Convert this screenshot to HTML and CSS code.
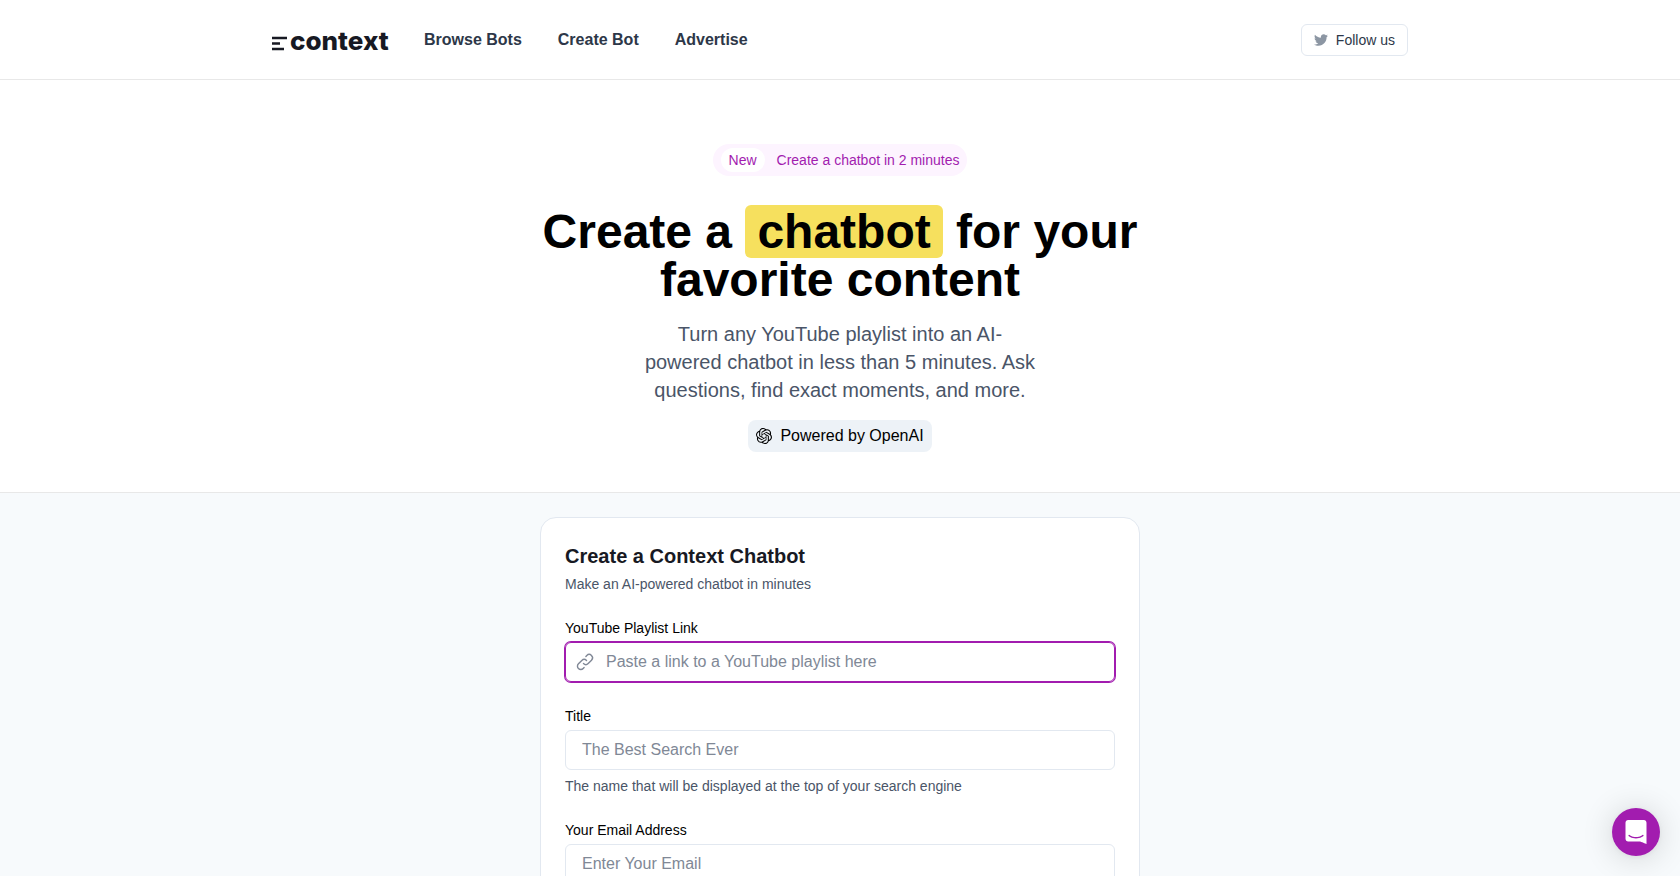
FILE: index.html
```html
<!DOCTYPE html>
<html lang="en">
<head>
  <meta charset="UTF-8">
  <meta name="viewport" content="width=device-width, initial-scale=1">
  <title>Context - Create a chatbot for your favorite content</title>
  <link rel="stylesheet" href="styles.css">
</head>
<body>

  <header class="header">
    <div class="header-inner">
      <a class="logo" href="#" aria-label="context">
        <svg width="116" height="32" viewBox="0 0 116 32">
          <path d="M0 14h15M0 19.500h8M0 25h12" stroke="currentColor" stroke-width="2.400" fill="none"/>
          <text class="logo-text" x="18" y="26">context</text>
        </svg>
      </a>
      <nav class="nav">
        <a href="#">Browse Bots</a>
        <a href="#">Create Bot</a>
        <a href="#">Advertise</a>
      </nav>
      <a class="follow" href="#">
        <svg width="14" height="14" viewBox="0 0 512 512" fill="currentColor" aria-hidden="true">
          <path d="M459.370 151.716c.325 4.548.325 9.097.325 13.645 0 138.720-105.583 298.558-298.558 298.558-59.452 0-114.680-17.219-161.137-47.106 8.447.974 16.568 1.299 25.340 1.299 49.055 0 94.213-16.568 130.274-44.832-46.132-.975-84.792-31.188-98.112-72.772 6.498.974 12.995 1.624 19.818 1.624 9.421 0 18.843-1.300 27.614-3.573-48.081-9.747-84.143-51.980-84.143-102.985v-1.299c13.969 7.797 30.214 12.670 47.431 13.319-28.264-18.843-46.781-51.005-46.781-87.391 0-19.492 5.197-37.360 14.294-52.954 51.655 63.675 129.300 105.258 216.365 109.807-1.624-7.797-2.599-15.918-2.599-24.040 0-57.828 46.782-104.934 104.934-104.934 30.213 0 57.502 12.670 76.670 33.137 23.715-4.548 46.456-13.320 66.599-25.340-7.798 24.366-24.366 44.833-46.132 57.827 21.117-2.273 41.584-8.122 60.426-16.243-14.292 20.791-32.161 39.308-52.628 54.253z"/>
        </svg>
        Follow us
      </a>
    </div>
  </header>

  <section class="hero">
    <a class="pill" href="#">
      <span class="pill-tag">New</span>
      Create a chatbot in 2 minutes
    </a>
    <h1>Create a <mark>chatbot</mark> for your favorite content</h1>
    <p class="lead">Turn any YouTube playlist into an AI-powered chatbot in less than 5 minutes. Ask questions, find exact moments, and more.</p>
    <div class="powered">
      <svg width="16" height="16" viewBox="0 0 24 24" fill="currentColor" aria-hidden="true">
        <path d="M22.2819 9.8211a5.9847 5.9847 0 0 0-.5157-4.9108 6.0462 6.0462 0 0 0-6.5098-2.9A6.0651 6.0651 0 0 0 4.9807 4.1818a5.9847 5.9847 0 0 0-3.9977 2.9 6.0462 6.0462 0 0 0 .7427 7.0966 5.98 5.98 0 0 0 .511 4.9107 6.051 6.051 0 0 0 6.5146 2.9001A5.9847 5.9847 0 0 0 13.2599 24a6.0557 6.0557 0 0 0 5.7718-4.2058 5.9894 5.9894 0 0 0 3.9977-2.9001 6.0557 6.0557 0 0 0-.7475-7.0729zm-9.022 12.6081a4.4755 4.4755 0 0 1-2.8764-1.0408l.1419-.0804 4.7783-2.7582a.7948.7948 0 0 0 .3927-.6813v-6.7369l2.02 1.1686a.071.071 0 0 1 .038.0520v5.5826a4.504 4.504 0 0 1-4.4945 4.4944zm-9.6607-4.1254a4.4708 4.4708 0 0 1-.5346-3.0137l.142.0852 4.783 2.7582a.7712.7712 0 0 0 .7806 0l5.8428-3.3685v2.3324a.0804.0804 0 0 1-.0332.0615L9.74 19.9502a4.4992 4.4992 0 0 1-6.1408-1.6464zM2.3408 7.8956a4.485 4.485 0 0 1 2.3655-1.9728V11.6a.7664.7664 0 0 0 .3879.6765l5.8144 3.3543-2.0201 1.1685a.0757.0757 0 0 1-.071 0l-4.8303-2.7865A4.504 4.504 0 0 1 2.3408 7.872zm16.5963 3.8558L13.1038 8.364 15.1192 7.2a.0757.0757 0 0 1 .071 0l4.8303 2.7913a4.4944 4.4944 0 0 1-.6765 8.1042v-5.6772a.79.79 0 0 0-.407-.667zm2.0107-3.0231l-.142-.0852-4.7735-2.7818a.7759.7759 0 0 0-.7854 0L9.409 9.2297V6.8974a.0662.0662 0 0 1 .0284-.0615l4.8303-2.7866a4.4992 4.4992 0 0 1 6.6802 4.66zM8.3065 12.863l-2.02-1.1638a.0804.0804 0 0 1-.038-.0567V6.0742a4.4992 4.4992 0 0 1 7.3757-3.4537l-.142.0805L8.704 5.459a.7948.7948 0 0 0-.3927.6813zm1.0976-2.3654l2.602-1.4998 2.6069 1.4998v2.9994l-2.5974 1.4997-2.6067-1.4997Z"/>
      </svg>
      Powered by OpenAI
    </div>
  </section>

  <main class="main">
    <form class="card">
      <div>
        <h2>Create a Context Chatbot</h2>
        <p class="subtitle">Make an AI-powered chatbot in minutes</p>
      </div>

      <div class="field">
        <label for="playlist">YouTube Playlist Link</label>
        <div class="input-group">
          <svg class="input-icon" width="20" height="20" viewBox="0 0 24 24" fill="none" stroke="currentColor" stroke-width="1.700" stroke-linecap="round" stroke-linejoin="round" aria-hidden="true">
            <path d="M13.828 10.172a4 4 0 0 0-5.656 0l-4 4a4 4 0 1 0 5.656 5.656l1.102-1.101m-.758-4.899a4 4 0 0 0 5.656 0l4-4a4 4 0 0 0-5.656-5.656l-1.100 1.100"/>
          </svg>
          <input class="input active with-icon" id="playlist" type="url" placeholder="Paste a link to a YouTube playlist here">
        </div>
      </div>

      <div class="field">
        <label for="title">Title</label>
        <input class="input" id="title" type="text" placeholder="The Best Search Ever">
        <p class="help">The name that will be displayed at the top of your search engine</p>
      </div>

      <div class="field">
        <label for="email">Your Email Address</label>
        <input class="input" id="email" type="email" placeholder="Enter Your Email">
      </div>
    </form>
  </main>

  <button class="chat" type="button" aria-label="Open chat">
    <svg width="22" height="24" viewBox="0 0 28 32" fill="currentColor" aria-hidden="true">
      <path d="M28 32s-4.714-1.855-8.527-3.340H3.437C1.540 28.660 0 27.026 0 25.013V3.644C0 1.633 1.540 0 3.437 0h21.125c1.898 0 3.437 1.632 3.437 3.645v18.404H28V32zm-4.139-11.982a.88.88 0 0 0-1.292-.105c-.03.026-3.015 2.681-8.570 2.681-5.486 0-8.517-2.636-8.571-2.684a.88.88 0 0 0-1.290.107 1.010 1.010 0 0 0-.219.708.992.992 0 0 0 .318.664c.142.128 3.537 3.150 9.762 3.150 6.226 0 9.621-3.022 9.763-3.150a.992.992 0 0 0 .317-.664 1.010 1.010 0 0 0-.218-.707z"/>
    </svg>
  </button>

</body>
</html>
```

FILE: styles.css
```css
:root {
  --accent: #a21caf;
  --accent-bg: #fdf4ff;
  --border: #e2e8f0;
  --muted: #4a5568;
  --page-bg: #f7fafc;
  --highlight: #f6e05e;
}

* {
  box-sizing: border-box;
}

body {
  margin: 0;
  font-family: "Liberation Sans", Arial, sans-serif;
  font-size: 16px;
  line-height: 24px;
  color: #000;
  background: #fff;
}

h1, h2, p {
  margin: 0;
}

a {
  color: inherit;
  text-decoration: none;
}

/* header */
.header {
  border-bottom: 1px solid #e8e8e8;
}

.header-inner {
  display: flex;
  align-items: center;
  max-width: 1200px;
  margin: 0 auto;
  padding: 24px 32px 23px;
}

.logo {
  display: flex;
  color: #171923;
}

.logo svg {
  overflow: visible;
}

.logo-text {
  font-family: Inter, sans-serif;
  font-size: 26px;
  font-weight: 800;
  fill: currentColor;
}

.nav {
  display: flex;
  gap: 36px;
  margin-left: 36px;
  font-weight: bold;
  color: #2d3748;
}

.follow {
  display: flex;
  align-items: center;
  gap: 8px;
  height: 32px;
  margin-left: auto;
  padding: 0 12px;
  border: 1px solid var(--border);
  border-radius: 6px;
  font-size: 14px;
  color: #2d3748;
}

.follow svg {
  color: #8c96a3;
}

/* hero */
.hero {
  display: flex;
  flex-direction: column;
  align-items: center;
  padding: 64px 24px 40px;
  border-bottom: 1px solid #e8e8e8;
  text-align: center;
}

.pill {
  display: flex;
  align-items: center;
  gap: 12px;
  padding: 4px 8px;
  border-radius: 16px;
  background: var(--accent-bg);
  font-size: 14px;
  color: var(--accent);
}

.pill-tag {
  padding: 0 8px;
  border-radius: 12px;
  background: #fff;
}

h1 {
  max-width: 640px;
  margin-top: 32px;
  font-size: 48px;
  line-height: 48px;
}

mark {
  padding: 0 12px;
  border-radius: 6px;
  background: var(--highlight);
  color: inherit;
}

.lead {
  max-width: 400px;
  margin-top: 16px;
  font-size: 20px;
  line-height: 28px;
  color: var(--muted);
}

.powered {
  display: flex;
  align-items: center;
  gap: 8px;
  margin-top: 16px;
  padding: 4px 8px;
  border-radius: 8px;
  background: #edf2f7;
}

/* form */
.main {
  padding: 24px;
  background: var(--page-bg);
}

.card {
  display: flex;
  flex-direction: column;
  gap: 24px;
  max-width: 600px;
  margin: 0 auto;
  padding: 24px;
  border: 1px solid var(--border);
  border-radius: 16px;
  background: #fff;
}

h2 {
  font-size: 20px;
  line-height: 28px;
  color: #171923;
}

.subtitle,
.help {
  font-size: 14px;
  line-height: 20px;
  color: var(--muted);
}

.subtitle {
  margin-top: 4px;
}

.help {
  margin-top: 6px;
}

.field label {
  display: block;
  margin-bottom: 4px;
  font-size: 14px;
  line-height: 20px;
}

.input-group {
  position: relative;
}

.input-icon {
  position: absolute;
  top: 10px;
  left: 10px;
  color: #808896;
}

.input {
  display: block;
  width: 100%;
  height: 40px;
  padding: 0 16px;
  border: 1px solid var(--border);
  border-radius: 6px;
  background: transparent;
  font: inherit;
  color: inherit;
}

.input::placeholder {
  color: #808896;
  opacity: 1;
}

.input.with-icon {
  padding-left: 40px;
}

.input:focus,
.input.active {
  outline: none;
  border-color: var(--accent);
  box-shadow: 0 0 0 1px var(--accent);
}

/* chat launcher */
.chat {
  position: fixed;
  right: 20px;
  bottom: 20px;
  display: flex;
  align-items: center;
  justify-content: center;
  width: 48px;
  height: 48px;
  padding: 0;
  border: none;
  border-radius: 50%;
  background: var(--accent);
  color: #fff;
  box-shadow: 0 1px 6px rgba(0, 0, 0, 0.06), 0 2px 32px rgba(0, 0, 0, 0.16);
  cursor: pointer;
}
```
